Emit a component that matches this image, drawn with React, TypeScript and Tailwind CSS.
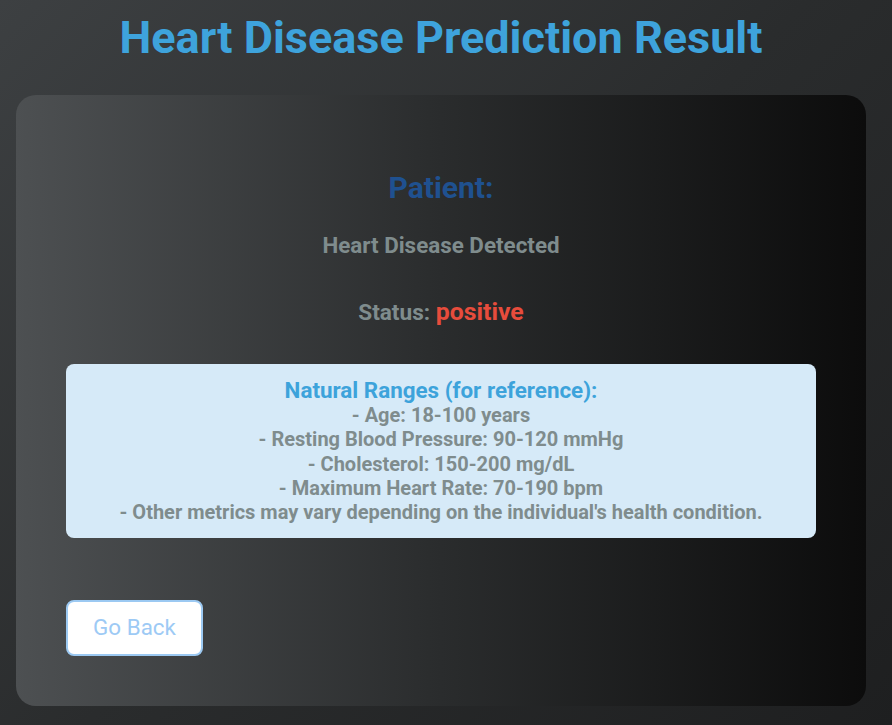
import React from "react";

export default function App() {
  return (
    <div
      className="min-h-[725px] w-full bg-[linear-gradient(135deg,#3d4042_0%,#2a2c2d_50%,#1e1f20_100%)] pb-[19px] pl-4 pt-[14px]"
      style={{ fontFamily: "Roboto, 'Liberation Sans', sans-serif" }}
    >
      <div className="w-[850px]">
        <h1 className="text-center text-[45px] font-bold leading-[48px] text-[#3ea3dc]">
          Heart Disease Prediction Result
        </h1>
        <div className="mt-[33px] h-[611px] rounded-[20px] bg-[linear-gradient(90deg,#4d5052_0%,#2a2c2d_50%,#0c0c0c_100%)] px-[50px] pt-[75px]">
          <h2 className="text-center text-[30px] font-bold leading-[36px] text-[#1f5190]">Patient:</h2>
          <p className="mt-[25px] text-center text-[22.4px] font-bold leading-[28px] text-[#7f8c8d]">
            Heart Disease Detected
          </p>
          <p className="mt-[38px] h-[30px] text-center text-[22.6px] font-bold leading-[30px] text-[#7f8c8d]">
            Status: <span className="text-[24.8px] text-[#e74c3c]">positive</span>
          </p>
          <div className="mt-[37px] rounded-[8px] bg-[#d6eaf8] px-4 pb-[14px] pt-[13px] text-center">
            <div className="text-[22.4px] font-bold leading-[26px] text-[#3da3db]">Natural Ranges (for reference):</div>
            <div className="text-[20px] font-bold leading-[24.25px] text-[#7f8c8d]">
              <div>- Age: 18-100 years</div>
              <div>- Resting Blood Pressure: 90-120 mmHg</div>
              <div>- Cholesterol: 150-200 mg/dL</div>
              <div>- Maximum Heart Rate: 70-190 bpm</div>
              <div>- Other metrics may vary depending on the individual's health condition.</div>
            </div>
          </div>
          <button className="mt-[62px] h-[56px] w-[137px] rounded-[8px] border-2 border-[#9cc9f2] bg-white text-[22.4px] text-[#9dcaf5]">
            Go Back
          </button>
        </div>
      </div>
    </div>
  );
}
